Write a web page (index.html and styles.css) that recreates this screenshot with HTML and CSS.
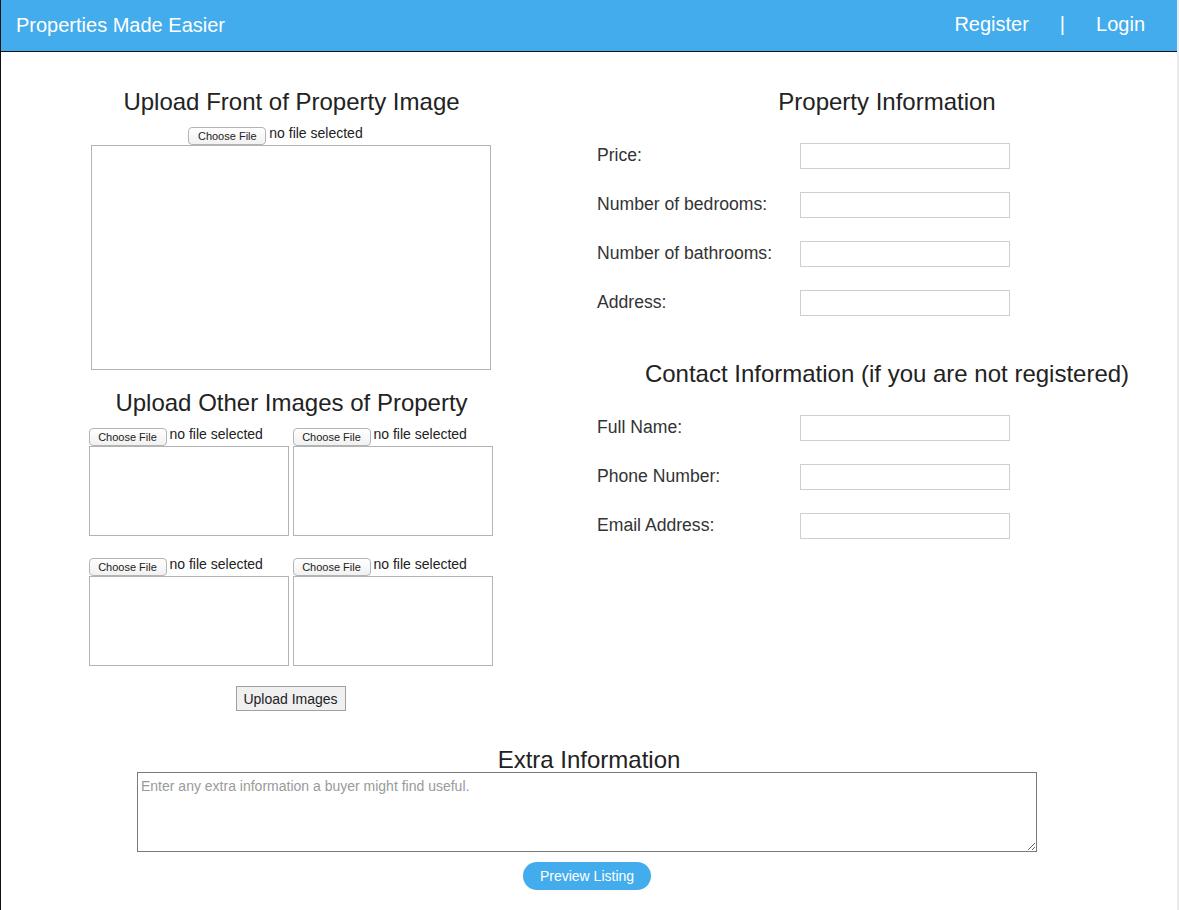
FILE: index.html
```html
<!DOCTYPE html>
<html lang="en">
<head>
<meta charset="utf-8">
<title>Properties Made Easier</title>
<link rel="stylesheet" href="styles.css">
</head>
<body>
<div class="page">
  <header class="topbar">
    <div class="brand">Properties Made Easier</div>
    <nav class="nav">
      <a class="nav-link">Register</a>
      <span class="nav-sep">|</span>
      <a class="nav-link">Login</a>
    </nav>
  </header>

  <main class="main">
    <section class="col-left">
      <h2 class="heading">Upload Front of Property Image</h2>
      <div class="file-row centered">
        <button class="file-btn">Choose File</button>
        <span class="file-text">no file selected</span>
      </div>
      <div class="preview-big"></div>

      <h2 class="heading heading-other">Upload Other Images of Property</h2>
      <div class="grid">
        <div class="cell">
          <div class="file-row"><button class="file-btn">Choose File</button><span class="file-text">no file selected</span></div>
          <div class="preview-small"></div>
        </div>
        <div class="cell">
          <div class="file-row"><button class="file-btn">Choose File</button><span class="file-text">no file selected</span></div>
          <div class="preview-small"></div>
        </div>
        <div class="cell">
          <div class="file-row"><button class="file-btn">Choose File</button><span class="file-text">no file selected</span></div>
          <div class="preview-small"></div>
        </div>
        <div class="cell">
          <div class="file-row"><button class="file-btn">Choose File</button><span class="file-text">no file selected</span></div>
          <div class="preview-small"></div>
        </div>
      </div>
      <button class="upload-btn">Upload Images</button>
    </section>

    <section class="col-right">
      <h2 class="heading">Property Information</h2>
      <div class="form">
        <div class="form-row"><label class="label">Price:</label><input class="field" type="text"></div>
        <div class="form-row"><label class="label">Number of bedrooms:</label><input class="field" type="text"></div>
        <div class="form-row"><label class="label">Number of bathrooms:</label><input class="field" type="text"></div>
        <div class="form-row"><label class="label">Address:</label><input class="field" type="text"></div>
      </div>

      <h2 class="heading heading-contact">Contact Information (if you are not registered)</h2>
      <div class="form form-contact">
        <div class="form-row"><label class="label">Full Name:</label><input class="field" type="text"></div>
        <div class="form-row"><label class="label">Phone Number:</label><input class="field" type="text"></div>
        <div class="form-row"><label class="label">Email Address:</label><input class="field" type="text"></div>
      </div>
    </section>
  </main>

  <section class="extra">
    <h2 class="heading heading-extra">Extra Information</h2>
    <textarea class="extra-text" placeholder="Enter any extra information a buyer might find useful."></textarea>
    <button class="preview-btn">Preview Listing</button>
  </section>
</div>
</body>
</html>
```

FILE: styles.css
```css
html {
  background: #ececec;
}
body {
  margin: 0;
  font-family: "Liberation Sans", Arial, Helvetica, sans-serif;
  color: #222;
}
.page {
  width: 1177px;
  min-height: 910px;
  background: #fff;
  border-left: 1px solid #111;
  box-sizing: border-box;
}
.topbar {
  height: 51px;
  background: #43acec;
  border-bottom: 1px solid #111;
  display: flex;
  align-items: center;
  justify-content: space-between;
  padding: 0 32px 0 15px;
  color: #fff;
  font-size: 20px;
}
.brand {
  line-height: 51px;
}
.nav {
  display: flex;
  align-items: center;
  gap: 31px;
  margin-top: -2px;
}
.nav-link {
  color: #fff;
  text-decoration: none;
}
.nav-sep {
  color: #fff;
}

.main {
  display: flex;
  padding-top: 36px;
}
.col-left {
  width: 579px;
  display: flex;
  flex-direction: column;
  align-items: center;
}
.col-right {
  width: 580px;
  margin-left: 17px;
  display: flex;
  flex-direction: column;
}
.heading {
  margin: 0;
  font-size: 24px;
  font-weight: normal;
  line-height: 28px;
  color: #222;
  text-align: center;
}
.col-left .heading {
  padding-left: 2px;
}
.file-row {
  display: flex;
  align-items: flex-start;
  gap: 3px;
  height: 20px;
}
.centered {
  margin-top: 9px;
  margin-right: 30px;
  justify-content: center;
}
.file-btn {
  margin-top: 2px;
  height: 18px;
  width: 78px;
  padding: 0;
  font-family: "Liberation Sans", Arial, sans-serif;
  font-size: 11px;
  color: #222;
  background: linear-gradient(#fff, #f1f1f1);
  border: 1px solid #b4b4b4;
  border-radius: 4px;
  box-sizing: border-box;
}
.file-text {
  font-size: 14px;
  line-height: 16px;
  color: #222;
}
.preview-big {
  width: 400px;
  height: 225px;
  border: 1px solid #b3b3b3;
  box-sizing: border-box;
}
.heading-other {
  margin-top: 19px;
}
.grid {
  margin-top: 9px;
  display: grid;
  grid-template-columns: 200px 200px;
  column-gap: 4px;
  row-gap: 20px;
}
.cell {
  display: flex;
  flex-direction: column;
}
.preview-small {
  width: 200px;
  height: 90px;
  border: 1px solid #b3b3b3;
  box-sizing: border-box;
}
.upload-btn {
  margin-top: 20px;
  width: 110px;
  height: 25px;
  padding: 0;
  font-family: "Liberation Sans", Arial, sans-serif;
  font-size: 14px;
  color: #222;
  background: #f0f0f0;
  border: 1px solid #a0a0a0;
  box-sizing: border-box;
}

.form {
  margin-top: 27px;
  display: flex;
  flex-direction: column;
  gap: 23px;
}
.form-row {
  display: flex;
  align-items: center;
  height: 26px;
}
.label {
  width: 203px;
  font-size: 17.6px;
  color: #333;
  margin-top: -1px;
}
.field {
  width: 210px;
  height: 26px;
  margin: 0;
  border: 1px solid #cfcfcf;
  box-sizing: border-box;
  padding: 0 4px;
  font-family: "Liberation Sans", Arial, sans-serif;
}
.heading-contact {
  margin-top: 44px;
}
.form-contact {
  margin-top: 27px;
}

.extra {
  margin-top: 36px;
  display: flex;
  flex-direction: column;
  align-items: center;
}
.heading-extra {
  line-height: 25px;
}
.extra-text {
  width: 900px;
  height: 80px;
  margin: 0 4px 0 0;
  box-sizing: border-box;
  border: 1px solid #7a7a7a;
  padding: 5px 3px 3px;
  font-family: "Liberation Sans", Arial, sans-serif;
  font-size: 14px;
  resize: vertical;
}
.extra-text::placeholder {
  color: #9a9a9a;
}
.preview-btn {
  margin: 10px 4px 0 0;
  width: 128px;
  height: 28px;
  border: none;
  border-radius: 14px;
  background: #43acec;
  color: #fff;
  font-family: "Liberation Sans", Arial, sans-serif;
  font-size: 14px;
  padding: 0;
}
```
